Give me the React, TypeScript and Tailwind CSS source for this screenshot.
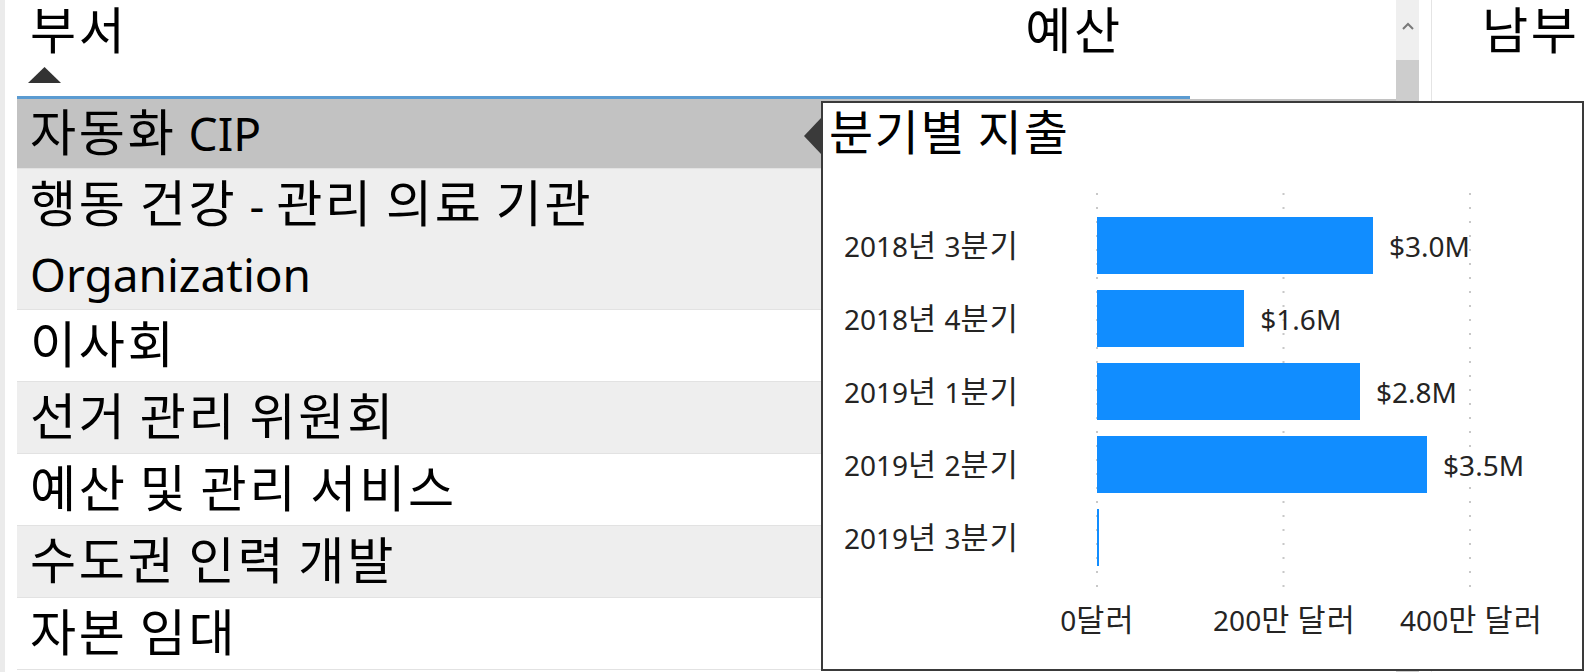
import React from 'react';

interface Quarter {
  label: string;
  value: number; // millions
  text: string;
}

const departments: { name: string[]; tone: 'selected' | 'gray' | 'white'; leading: string }[] = [
  { name: ['자동화 CIP'], tone: 'selected', leading: 'leading-[69px]' },
  { name: ['행동 건강 - 관리 의료 기관', 'Organization'], tone: 'gray', leading: 'leading-[70px]' },
  { name: ['이사회'], tone: 'white', leading: 'leading-[71px]' },
  { name: ['선거 관리 위원회'], tone: 'gray', leading: 'leading-[71px]' },
  { name: ['예산 및 관리 서비스'], tone: 'white', leading: 'leading-[71px]' },
  { name: ['수도권 인력 개발'], tone: 'gray', leading: 'leading-[71px]' },
  { name: ['자본 임대'], tone: 'white', leading: 'leading-[71px]' },
];

const quarters: Quarter[] = [
  { label: '2018년 3분기', value: 2.96, text: '$3.0M' },
  { label: '2018년 4분기', value: 1.58, text: '$1.6M' },
  { label: '2019년 1분기', value: 2.82, text: '$2.8M' },
  { label: '2019년 2분기', value: 3.54, text: '$3.5M' },
  { label: '2019년 3분기', value: 0.02, text: '' },
];

// 2M dollars per gridline step
const PX_PER_MILLION = 93.25;

const font = { fontFamily: '"Noto Sans", "Noto Sans CJK KR", sans-serif' };

// Hangul in the original UI font is drawn larger than Noto's, so bump those runs
function Ko({ text, wide = false }: { text: string; wide?: boolean }) {
  const parts = text.split(/([\uac00-\ud7a3]+)/);
  return (
    <>
      {parts.map((p, i) =>
        /[\uac00-\ud7a3]/.test(p) ? (
          <span
            key={i}
            className={`text-[1.09em] leading-none ${wide ? 'tracking-[0.055em]' : 'tracking-[0.035em]'}`}
          >
            {p}
          </span>
        ) : (
          <React.Fragment key={i}>{p}</React.Fragment>
        )
      )}
    </>
  );
}

function SpendTooltip() {
  return (
    <div className="absolute left-[821px] top-[101px] w-[763px] h-[570px] border-2 border-[#3a3a3a] bg-white">
      {/* pointer */}
      <svg className="absolute -left-[19px] top-[15px]" width="17" height="36" viewBox="0 0 17 36">
        <polygon points="17,0 0,18 17,36" fill="#3a3a3a" />
      </svg>

      <div className="pt-[4px] pl-[6px] text-[44px] leading-[52px] text-black">
        <Ko text="분기별 지출" />
      </div>

      <div className="relative mt-[50px] pl-[21px]">
        {/* dotted gridlines */}
        <svg className="absolute left-[273px] -top-[16px]" width="380" height="406">
          {[1, 187.5, 374].map((x) => (
            <line key={x} x1={x} y1="0" x2={x} y2="406" stroke="#c8c8c8" strokeWidth="2" strokeDasharray="2 12" />
          ))}
        </svg>

        {quarters.map((q) => (
          <div key={q.label} className="relative flex items-center h-[73px]">
            <div className="w-[253px] text-[28px] leading-[36px] text-[#252423]">
              <Ko text={q.label} />
            </div>
            <div className="flex items-center">
              <div className="h-[57px] bg-[#118dff]" style={{ width: Math.max(2, q.value * PX_PER_MILLION) }} />
              {q.text && <span className="ml-[16px] text-[28px] text-[#252423]">{q.text}</span>}
            </div>
          </div>
        ))}
      </div>

      <div className="flex mt-[28px] ml-[181px] text-[28px] leading-[36px] text-[#252423]">
        <div className="w-[187px] text-center whitespace-nowrap">
          <Ko text="0달러" />
        </div>
        <div className="w-[187px] text-center whitespace-nowrap">
          <Ko text="200만 달러" />
        </div>
        <div className="w-[187px] text-center whitespace-nowrap">
          <Ko text="400만 달러" />
        </div>
      </div>
    </div>
  );
}

export default function App() {
  return (
    <div className="relative w-[1584px] h-[672px] overflow-hidden bg-white flex text-black" style={font}>
      <div className="w-[5px] h-full bg-[#ebebeb]" />

      {/* department table */}
      <div className="ml-[12px] w-[1173px] flex flex-col">
        <div className="h-[96px] shrink-0 flex">
          <div className="flex-1 pl-[13px] pt-[1px]">
            <div className="text-[46px] leading-[60px]">
              <Ko text="부서" wide />
            </div>
            <svg className="mt-[6px] -ml-[2px]" width="33" height="16" viewBox="0 0 33 16">
              <polygon points="16.5,0 33,16 0,16" fill="#333333" />
            </svg>
          </div>
          <div className="w-[238px] pt-[1px] pl-[6px] text-center text-[46px] leading-[60px]">
            <Ko text="예산" wide />
          </div>
        </div>
        <div className="h-[3px] shrink-0 bg-[#5b9bd1]" />
        <div className="w-[1379px] shrink-0">
          {departments.map((d) => (
            <div
              key={d.name[0]}
              className={`pl-[13px] border-b border-[#e2e2e2] text-[46px] ${d.leading} ${
                d.tone === 'selected' ? 'bg-[#c2c2c2]' : d.tone === 'gray' ? 'bg-[#eeeeee]' : 'bg-white'
              }`}
            >
              {d.name.map((line) => (
                <div key={line} className="whitespace-nowrap">
                  <Ko text={line} wide />
                </div>
              ))}
            </div>
          ))}
        </div>
      </div>

      {/* scrollbar */}
      <div className="ml-[206px] w-[23px] h-full bg-[#efefef] flex flex-col items-center">
        <svg className="mt-[22px]" width="12" height="8" viewBox="0 0 12 8">
          <polyline points="1,7 6,2 11,7" fill="none" stroke="#7a7a7a" strokeWidth="2" />
        </svg>
        <div className="mt-[30px] w-full flex-1 bg-[#cdcdcd]" />
      </div>

      <div className="ml-[12px] w-px h-full bg-[#e4e4e4]" />

      <div className="pl-[50px] pt-[1px] text-[46px] leading-[60px] whitespace-nowrap">
        <Ko text="남부" wide />
      </div>

      <SpendTooltip />
    </div>
  );
}
